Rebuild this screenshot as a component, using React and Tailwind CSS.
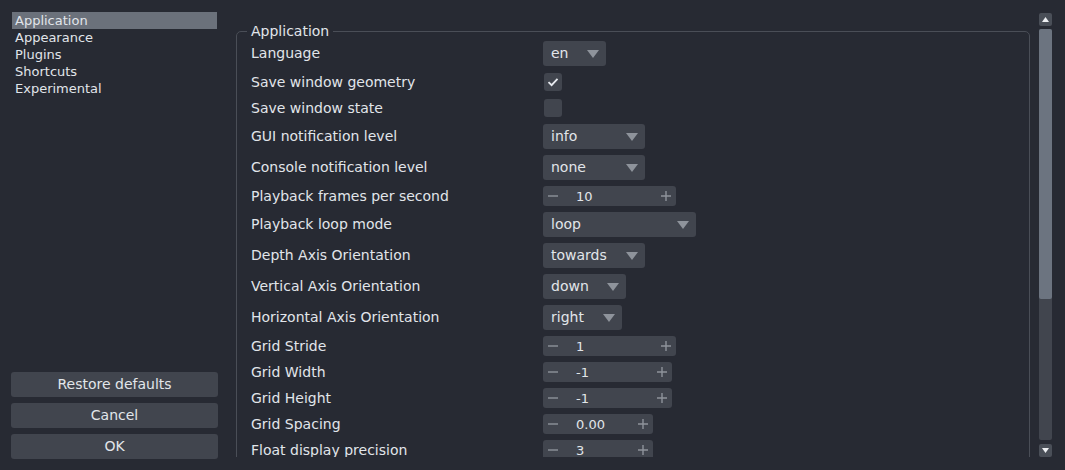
const font = { fontFamily: '"DejaVu Sans", "Liberation Sans", sans-serif' }

const rows = [
  { label: 'Language', type: 'combo', value: 'en', w: 'w-[63px]' },
  { label: 'Save window geometry', type: 'check', checked: true },
  { label: 'Save window state', type: 'check', checked: false },
  { label: 'GUI notification level', type: 'combo', value: 'info', w: 'w-[102px]' },
  { label: 'Console notification level', type: 'combo', value: 'none', w: 'w-[102px]' },
  { label: 'Playback frames per second', type: 'spin', value: '10', w: 'w-[133px]' },
  { label: 'Playback loop mode', type: 'combo', value: 'loop', w: 'w-[153px]' },
  { label: 'Depth Axis Orientation', type: 'combo', value: 'towards', w: 'w-[102px]' },
  { label: 'Vertical Axis Orientation', type: 'combo', value: 'down', w: 'w-[83px]' },
  { label: 'Horizontal Axis Orientation', type: 'combo', value: 'right', w: 'w-[79px]' },
  { label: 'Grid Stride', type: 'spin', value: '1', w: 'w-[133px]' },
  { label: 'Grid Width', type: 'spin', value: '-1', w: 'w-[129px]' },
  { label: 'Grid Height', type: 'spin', value: '-1', w: 'w-[129px]' },
  { label: 'Grid Spacing', type: 'spin', value: '0.00', w: 'w-[110px]' },
  { label: 'Float display precision', type: 'spin', value: '3', w: 'w-[110px]' },
]

const pages = ['Application', 'Appearance', 'Plugins', 'Shortcuts', 'Experimental']

function Combo({ value, w }) {
  return (
    <div className={`${w} h-[25px] rounded-[3px] bg-[#41454e] flex items-center justify-between pl-[8px] pr-[7px]`}>
      <span>{value}</span>
      <svg width="12" height="8" viewBox="0 0 12 8">
        <path d="M0 0 L12 0 L6 8 Z" fill="#8e939b" />
      </svg>
    </div>
  )
}

function Check({ checked }) {
  return (
    <div className="ml-[1px] w-[18px] h-[18px] rounded-[3px] bg-[#41454e] flex items-center justify-center">
      {checked && (
        <svg width="12" height="10" viewBox="0 0 12 10">
          <path d="M1.5 5.2 L4.6 8.2 L10.5 1.8" stroke="#e6e9ee" strokeWidth="1.8" fill="none" />
        </svg>
      )}
    </div>
  )
}

function Spin({ value, w }) {
  return (
    <div className={`${w} h-[20px] rounded-[3px] bg-[#41454e] flex items-center px-[5px]`}>
      <svg width="10" height="10" viewBox="0 0 10 10">
        <path d="M0 5 H10" stroke="#8e939b" strokeWidth="1.4" />
      </svg>
      <span className="ml-[18px] flex-1 text-[13px]">{value}</span>
      <svg width="10" height="10" viewBox="0 0 10 10">
        <path d="M0 5 H10 M5 0 V10" stroke="#8e939b" strokeWidth="1.4" />
      </svg>
    </div>
  )
}

export default function App() {
  return (
    <div style={font} className="w-[1065px] h-[470px] bg-[#272a33] text-[#e1e5ea] text-[14px] leading-[17px] flex overflow-hidden">
      {/* Sidebar */}
      <div className="w-[207px] ml-[11px] flex flex-col pt-[12px] pb-[11px]">
        <div className="flex flex-col pl-[1px] pr-[1px] text-[13px]">
          {pages.map((p, i) => (
            <div key={p} className={`h-[17px] pl-[3px] ${i === 0 ? 'bg-[#6b717b]' : ''}`}>{p}</div>
          ))}
        </div>
        <div className="mt-auto flex flex-col gap-[6px]">
          {['Restore defaults', 'Cancel', 'OK'].map(b => (
            <button key={b} className="h-[25px] rounded-[3px] bg-[#41454e] text-center">{b}</button>
          ))}
        </div>
      </div>

      {/* Settings */}
      <div className="ml-[18px] w-[794px] pt-[12px] pb-[13px]">
        <div className="h-full overflow-hidden">
          <div className="relative mt-[19px] border border-[#4a4e57] rounded-[5px] pt-[9px] pl-[14px] pb-[20px]">
            <span className="absolute top-[-9px] left-[10px] px-[4px] bg-[#272a33]">Application</span>
            <div className="flex flex-col gap-[6px]">
              {rows.map(r => (
                <div key={r.label} className="flex items-center min-h-[20px]">
                  <div className="w-[292px]">{r.label}</div>
                  {r.type === 'combo' && <Combo value={r.value} w={r.w} />}
                  {r.type === 'check' && <Check checked={r.checked} />}
                  {r.type === 'spin' && <Spin value={r.value} w={r.w} />}
                </div>
              ))}
            </div>
          </div>
        </div>
      </div>

      {/* Scrollbar */}
      <div className="ml-[9px] w-[13px] flex flex-col pt-[13px] pb-[13px]">
        <div className="h-[13px] rounded-[2px] bg-[#4a4f58] flex items-center justify-center">
          <svg width="7" height="5" viewBox="0 0 7 5"><path d="M0 5 L3.5 0 L7 5 Z" fill="#eef0f3" /></svg>
        </div>
        <div className="mt-[3px] flex-1 rounded-[2px] bg-[#41454e] flex flex-col">
          <div className="h-[270px] rounded-[2px] bg-[#6c7480]" />
        </div>
        <div className="mt-[4px] h-[13px] rounded-[2px] bg-[#4a4f58] flex items-center justify-center">
          <svg width="7" height="5" viewBox="0 0 7 5"><path d="M0 0 L7 0 L3.5 5 Z" fill="#eef0f3" /></svg>
        </div>
      </div>
    </div>
  )
}
